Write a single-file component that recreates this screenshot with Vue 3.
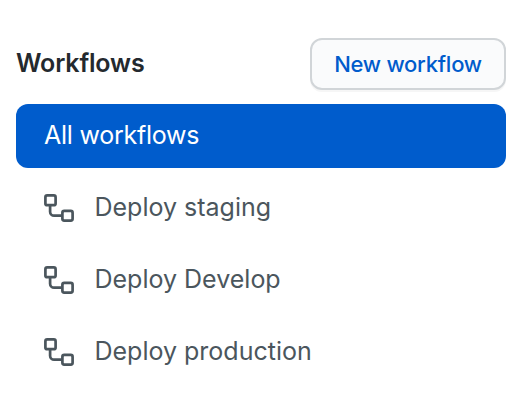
<script setup>
const workflows = ['Deploy staging', 'Deploy Develop', 'Deploy production']
</script>

<template>
  <main class="panel">
    <header class="header">
      <h2 class="title">Workflows</h2>
      <button class="new" type="button">New workflow</button>
    </header>
    <nav class="list">
      <a class="item selected">All workflows</a>
      <a v-for="name in workflows" :key="name" class="item">
        <svg class="icon" width="32" height="32" viewBox="0 0 32 32" fill="none" stroke="currentColor" stroke-width="2.7">
          <rect x="2.4" y="3.4" width="10.2" height="9.8" rx="1.8" />
          <rect x="19.4" y="18.9" width="10.2" height="9.7" rx="1.8" />
          <path d="M7.1 13v6.7a4 4 0 0 0 4 4h8" />
        </svg>
        <span>{{ name }}</span>
      </a>
    </nav>
  </main>
</template>

<style>
body {
  background: #fff;
}
</style>

<style scoped>
.panel {
  box-sizing: border-box;
  width: 518px;
  height: 402px;
  padding: 38px 12px 0 16px;
  font-family: Inter, "Liberation Sans", sans-serif;
}
.header {
  display: flex;
  align-items: center;
  justify-content: space-between;
  height: 52px;
}
.title {
  margin: 0;
  padding-bottom: 2px;
  font-size: 25px;
  font-weight: 600;
  line-height: 36px;
  letter-spacing: -0.15px;
  color: #24292e;
}
.new {
  box-sizing: border-box;
  width: 196px;
  height: 52px;
  padding: 0;
  border: 2px solid #d1d5d8;
  border-radius: 12px;
  background: #fafbfc;
  box-shadow: 0 2px 0 rgba(27, 31, 35, 0.04);
  color: #005ccc;
  font: 550 22px/48px Inter, "Liberation Sans", sans-serif;
  letter-spacing: -0.25px;
  white-space: nowrap;
}
.list {
  display: flex;
  flex-direction: column;
  gap: 8px;
  margin-top: 14px;
}
.item {
  box-sizing: border-box;
  display: flex;
  align-items: center;
  height: 64px;
  padding: 0 28px 2px 27px;
  border-radius: 12px;
  font-size: 25px;
  line-height: 36px;
  color: #4b565d;
  white-space: nowrap;
}
.selected {
  padding-left: 28px;
  background: #005ccc;
  color: #fff;
  letter-spacing: -0.25px;
}
.icon {
  flex: none;
  margin: 2px 19.5px 0 0;
}
</style>
